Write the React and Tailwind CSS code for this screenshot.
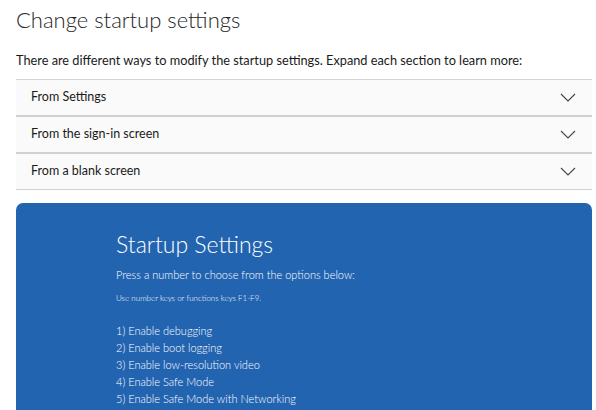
import React from 'react'

const sections = ['From Settings', 'From the sign-in screen', 'From a blank screen']

const options = [
  '1) Enable debugging',
  '2) Enable boot logging',
  '3) Enable low-resolution video',
  '4) Enable Safe Mode',
  '5) Enable Safe Mode with Networking',
]

function Chevron() {
  return (
    <svg width="16" height="9" viewBox="0 0 16 9" fill="none">
      <path d="M1 1 L8 8 L15 1" stroke="#444" strokeWidth="1.1" />
    </svg>
  )
}

export default function App() {
  return (
    <div className="w-[596px] h-[410px] overflow-hidden bg-white pl-4 pr-1 text-[#1a1a1a]" style={{ fontFamily: 'Lato, "Liberation Sans", sans-serif' }}>
      <h1 className="pt-[5px] text-[22px] font-light leading-[30px] text-[#262626]">Change startup settings</h1>
      <p className="mt-[16px] text-[12.75px] leading-[18px]">
        There are different ways to modify the startup settings. Expand each section to learn more:
      </p>
      <div className="mt-[10px] border-t border-[#d4d4d4]">
        {sections.map((s) => (
          <div key={s} className="flex h-[37px] items-center justify-between border-b-2 border-[#d0d0d0] bg-[#fafafa] pl-[15px] pr-[16px] last:border-b last:h-[36px]">
            <span className="text-[12.5px]">{s}</span>
            <Chevron />
          </div>
        ))}
      </div>
      <div className="mt-[13px] h-[260px] rounded-t-[7px] bg-[#2364b1] pl-[100px] pt-[26px] text-white">
        <div className="text-[23px] font-light leading-[30px]">Startup Settings</div>
        <div className="mt-[9px] text-[11px] font-light leading-[14px]">Press a number to choose from the options below:</div>
        <div className="mt-[11px] text-[8px] font-light leading-[10px]">Use number keys or functions keys F1-F9.</div>
        <div className="mt-[19px] flex flex-col text-[11px] font-light leading-[17px]">
          {options.map((o) => (
            <span key={o}>{o}</span>
          ))}
        </div>
      </div>
    </div>
  )
}
